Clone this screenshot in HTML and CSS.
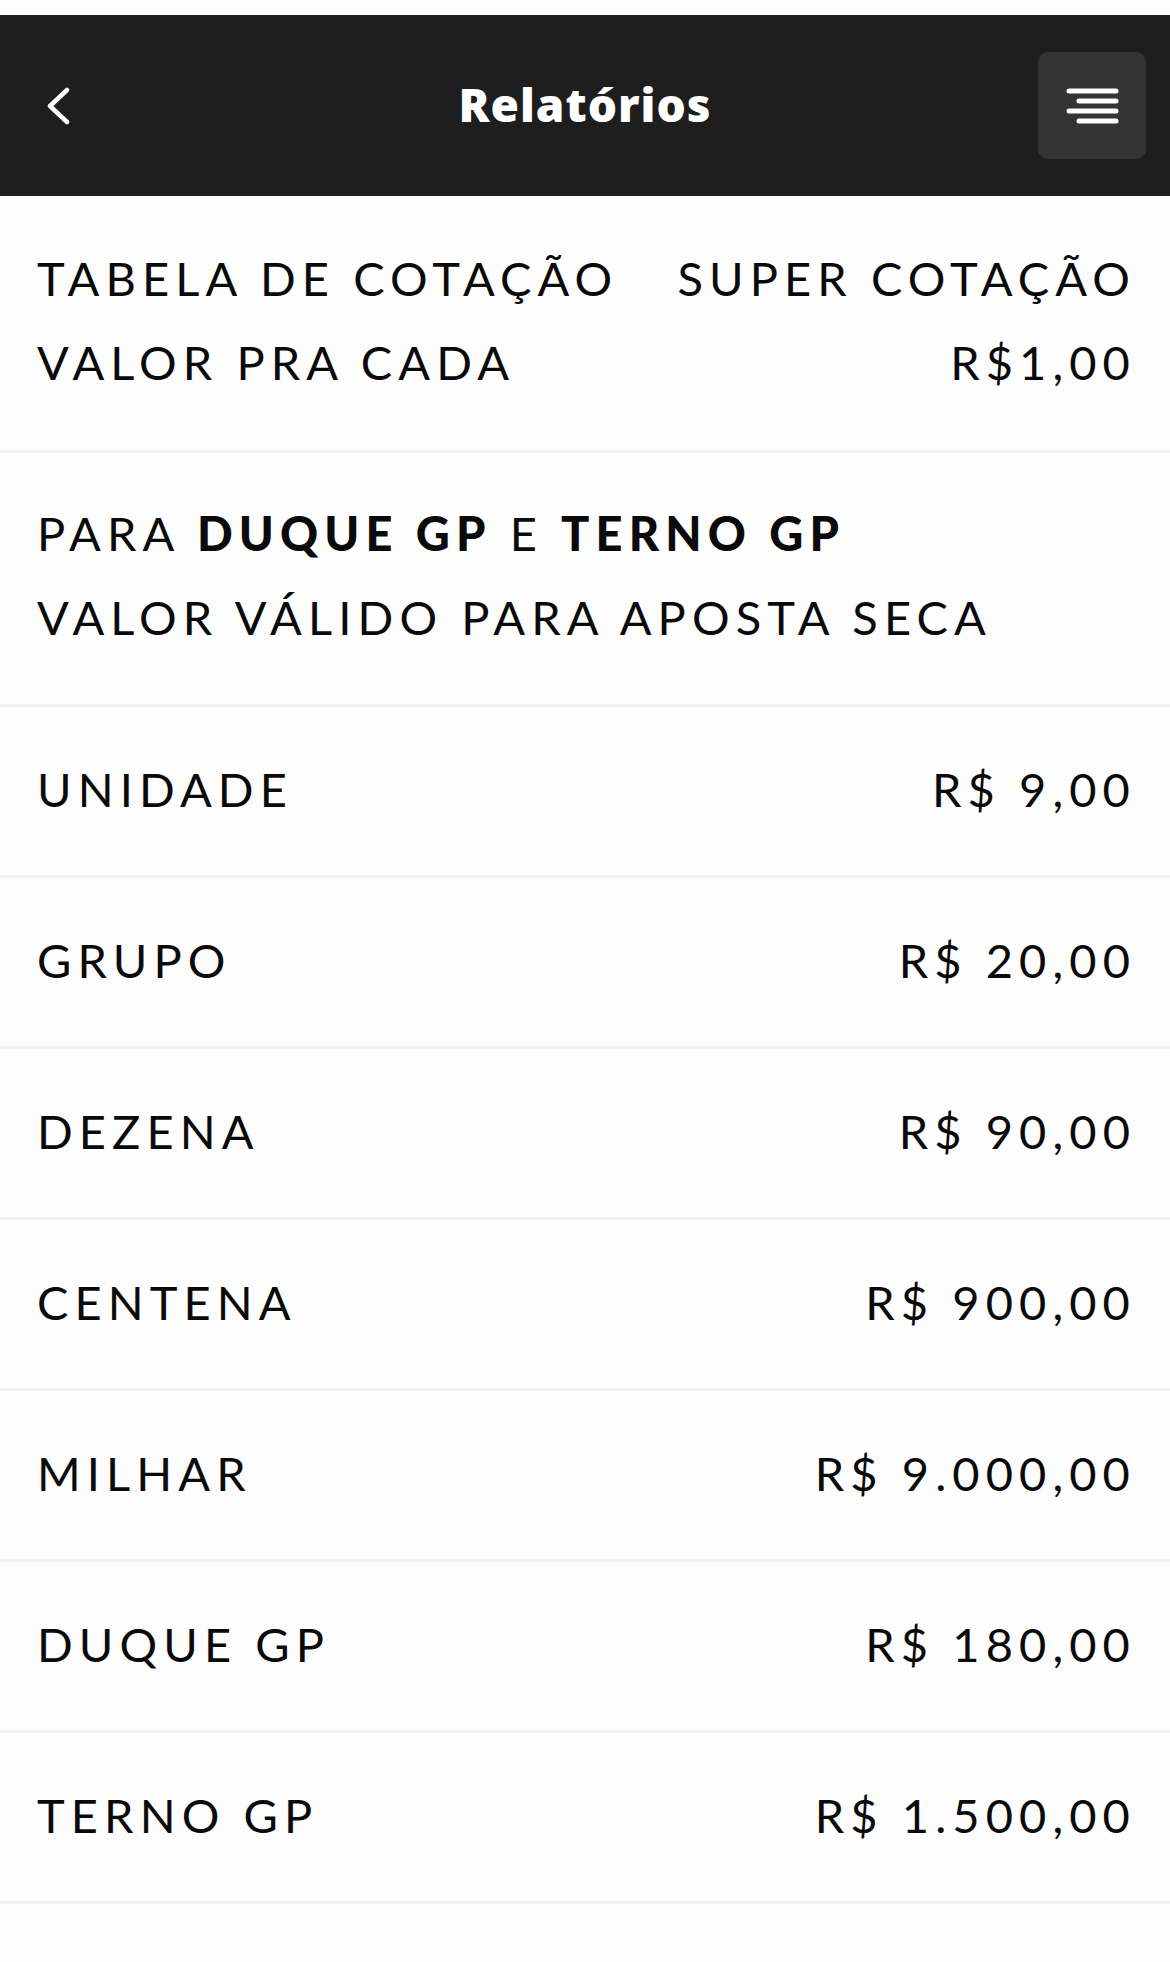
FILE: index.html
```html
<!DOCTYPE html>
<html lang="pt-BR">
<head>
    <meta charset="UTF-8">
    <meta name="viewport" content="width=device-width, initial-scale=1.0">
    <title>Relatórios</title>
    <link rel="stylesheet" href="styles.css">
</head>
<body>
    <header class="topbar">
        <button class="topbar__back" aria-label="Voltar">
            <svg width="26" height="38" viewBox="0 0 26 38">
                <polyline points="21,3 4,19 21,35" fill="none" stroke="#fff" stroke-width="4.5" stroke-linecap="round" stroke-linejoin="round"/>
            </svg>
        </button>
        <h1 class="topbar__title">Relatórios</h1>
        <button class="topbar__menu" aria-label="Menu">
            <svg width="108" height="107" viewBox="0 0 108 107">
                <g stroke="#fff" stroke-width="5" stroke-linecap="round">
                    <line x1="31" y1="39" x2="78" y2="39"/>
                    <line x1="41" y1="49" x2="78" y2="49"/>
                    <line x1="31" y1="59" x2="78" y2="59"/>
                    <line x1="41" y1="69" x2="78" y2="69"/>
                </g>
            </svg>
        </button>
    </header>

    <main class="quotes">
        <section class="quotes__head">
            <div class="quotes__line">
                <span>TABELA DE COTAÇÃO</span>
                <span>SUPER COTAÇÃO</span>
            </div>
            <div class="quotes__line">
                <span>VALOR PRA CADA</span>
                <span>R$1,00</span>
            </div>
        </section>

        <section class="quotes__notice">
            <div class="quotes__line">
                <span>PARA <b>DUQUE GP</b> E <b>TERNO GP</b></span>
            </div>
            <div class="quotes__line">
                <span>VALOR VÁLIDO PARA APOSTA SECA</span>
            </div>
        </section>

        <div class="quotes__row"><span>UNIDADE</span><span>R$ 9,00</span></div>
        <div class="quotes__row"><span>GRUPO</span><span>R$ 20,00</span></div>
        <div class="quotes__row"><span>DEZENA</span><span>R$ 90,00</span></div>
        <div class="quotes__row"><span>CENTENA</span><span>R$ 900,00</span></div>
        <div class="quotes__row"><span>MILHAR</span><span>R$ 9.000,00</span></div>
        <div class="quotes__row"><span>DUQUE GP</span><span>R$ 180,00</span></div>
        <div class="quotes__row"><span>TERNO GP</span><span>R$ 1.500,00</span></div>
    </main>
</body>
</html>
```

FILE: styles.css
```css
/* Global Styles */
html, body {
    margin: 0;
    padding: 0;
    background: #fdfdfd;
    font-family: Lato, 'Open Sans', Arial, sans-serif;
    color: #0a0a0a;
}

/* Header */
.topbar {
    margin-top: 15px;
    height: 181px;
    background-color: #1e1e1e;
    display: grid;
    grid-template-columns: 1fr auto 1fr;
    align-items: center;
    padding: 0 24px;
}

.topbar__back {
    justify-self: start;
    background: none;
    border: 0;
    padding: 0;
    margin-left: 22px;
    margin-top: 1px;
    display: flex;
}

.topbar__title {
    margin: 0;
    margin-top: -4px;
    color: #fff;
    font-family: 'Open Sans', Lato, sans-serif;
    font-size: 46px;
    font-weight: 800;
    letter-spacing: 1px;
}

.topbar__menu {
    justify-self: end;
    width: 108px;
    height: 107px;
    border: 0;
    padding: 0;
    border-radius: 10px;
    background-color: #343434;
    display: flex;
}

/* Quote table */
.quotes {
    font-size: 47px;
    letter-spacing: 0.13em;
    white-space: nowrap;
}

.quotes__head {
    padding: 40px 34px 46px 37px;
    border-bottom: 3px solid #f2f2f4;
}

.quotes__notice {
    padding: 38px 34px 45px 37px;
    border-bottom: 3px solid #f2f2f4;
}

.quotes__notice b {
    font-weight: 900;
}

.quotes__line {
    height: 84px;
    display: flex;
    align-items: center;
    justify-content: space-between;
}

.quotes__row {
    box-sizing: border-box;
    height: 171px;
    padding: 0 34px 4px 37px;
    display: flex;
    align-items: center;
    justify-content: space-between;
    border-bottom: 3px solid #f2f2f4;
}
```
